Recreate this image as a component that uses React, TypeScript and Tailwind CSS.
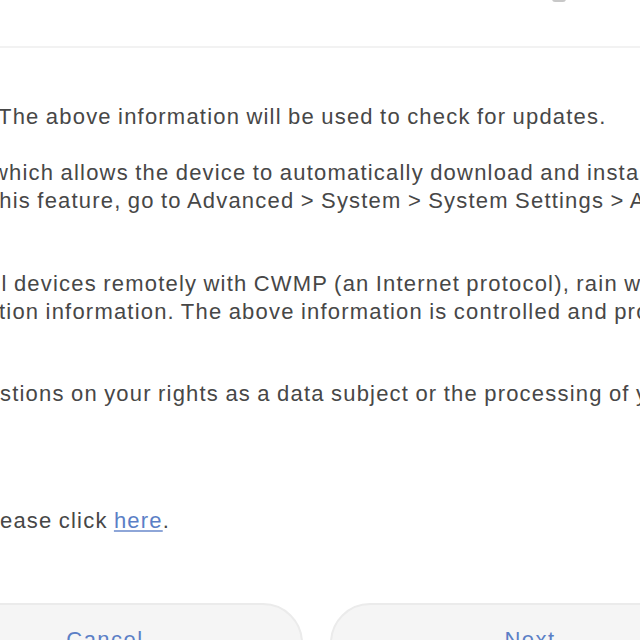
export default function App() {
  const line = 'whitespace-nowrap h-[28px] leading-[28px] tracking-[1.2px] [word-spacing:-1px]'

  return (
    <div
      className="w-[640px] h-[640px] overflow-hidden bg-white text-[22px] text-[#474747]"
      style={{ fontFamily: '"Liberation Sans", Arial, sans-serif' }}
    >
      {/* Header */}
      <div className="h-[46px] flex justify-end pr-[74px]">
        <div className="w-[14px] h-[3px] -mt-px rounded-b-full bg-[#c8c8c8]" />
      </div>
      <div className="h-[2px] bg-[#f2f2f2]" />

      {/* Body */}
      <div className="pt-[55px] flex flex-col">
        <div className={`${line} -ml-[2px]`}>The above information will be used to check for updates.</div>

        <div className="mt-[28px]">
          <div className={`${line} -ml-[8px]`}>
            which allows the device to automatically download and install new firmware.
          </div>
          <div className={`${line} -ml-[8px]`}>
            this feature, go to Advanced &gt; System &gt; System Settings &gt; Auto Update.
          </div>
        </div>

        <div className="mt-[55px]">
          <div className={`${line} -ml-[18px]`}>
            all devices remotely with CWMP (an Internet protocol), rain which collects
          </div>
          <div className={`${line} -ml-[1px]`}>
            tion information. The above information is controlled and processed by us.
          </div>
        </div>

        <div className={`${line} mt-[54px]`}>
          stions on your rights as a data subject or the processing of your data,
        </div>

        <div className={`${line} mt-[99px]`}>
          ease click{' '}
          <a href="#" className="text-[#5b7fc6] underline underline-offset-2 decoration-[#8ea6d8]">
            here
          </a>
          .
        </div>

        {/* Buttons */}
        <div className="mt-[68px] flex gap-[27px] -ml-[93px]">
          <button className="w-[396px] h-[80px] shrink-0 rounded-[40px] bg-[#f5f5f5] border-2 border-[#ebebeb] text-[#5b7fc6] text-[22px] tracking-[1.5px] pt-[18px] flex justify-center">
            Cancel
          </button>
          <button className="w-[400px] h-[80px] shrink-0 rounded-[40px] bg-[#f5f5f5] border-2 border-[#ebebeb] text-[#5b7fc6] text-[22px] tracking-[1.5px] pt-[18px] flex justify-center">
            Next
          </button>
        </div>
      </div>
    </div>
  )
}
